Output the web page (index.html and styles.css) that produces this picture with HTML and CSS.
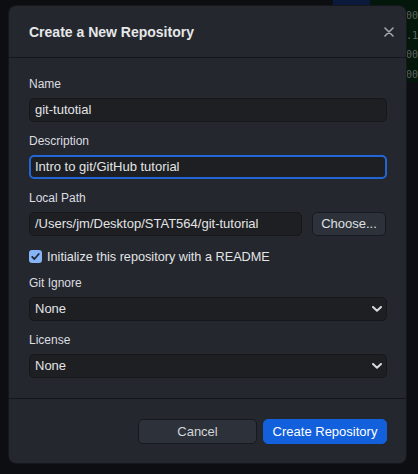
FILE: index.html
```html
<!DOCTYPE html>
<html>
<head>
<meta charset="utf-8">
<link rel="stylesheet" href="styles.css">
</head>
<body>
<div class="backdrop" aria-hidden="true">
  <div class="bg-blue"></div>
  <div class="bg-green"></div>
  <div class="bg-code">
    <div>00</div>
    <div>.1</div>
    <div>00</div>
    <div>00</div>
  </div>
</div>
<div class="dialog">
  <div class="dialog-header">
    <h1 class="title">Create a New Repository</h1>
    <svg class="close" width="10" height="10" viewBox="0 0 10 10"><path d="M1 1 L9 9 M9 1 L1 9" stroke="#a3a7ad" stroke-width="1.6" stroke-linecap="round" fill="none"/></svg>
  </div>
  <div class="dialog-body">
    <div class="field">
      <div class="label">Name</div>
      <div class="input">git-tutotial</div>
    </div>
    <div class="field">
      <div class="label">Description</div>
      <div class="input focused">Intro to git/GitHub tutorial</div>
    </div>
    <div class="field">
      <div class="label">Local Path</div>
      <div class="path-row">
        <div class="input path">/Users/jm/Desktop/STAT564/git-tutorial</div>
        <div class="btn choose">Choose...</div>
      </div>
    </div>
    <div class="check-row">
      <span class="checkbox"><svg width="13" height="13" viewBox="0 0 13 13"><path d="M3.2 6.8 L5.4 9 L9.8 4" stroke="#1d2a3a" stroke-width="1.8" fill="none" stroke-linecap="round" stroke-linejoin="round"/></svg></span>
      <span class="check-label">Initialize this repository with a README</span>
    </div>
    <div class="field">
      <div class="label">Git Ignore</div>
      <div class="input select"><span>None</span><svg width="10" height="6" viewBox="0 0 10 6"><path d="M1 1 L5 4.8 L9 1" stroke="#d9dadc" stroke-width="2" fill="none" stroke-linecap="round" stroke-linejoin="round"/></svg></div>
    </div>
    <div class="field">
      <div class="label">License</div>
      <div class="input select"><span>None</span><svg width="10" height="6" viewBox="0 0 10 6"><path d="M1 1 L5 4.8 L9 1" stroke="#d9dadc" stroke-width="2" fill="none" stroke-linecap="round" stroke-linejoin="round"/></svg></div>
    </div>
  </div>
  <div class="dialog-footer">
    <div class="btn cancel">Cancel</div>
    <div class="btn primary">Create Repository</div>
  </div>
</div>
</body>
</html>
```

FILE: styles.css
```css
html, body {
  margin: 0;
  padding: 0;
}
body {
  width: 418px;
  height: 474px;
  background: #0d0e11;
  font-family: "Liberation Sans", Arial, sans-serif;
  position: relative;
  overflow: hidden;
  padding-top: 6px;
  box-sizing: border-box;
}
.backdrop {
  position: absolute;
  inset: 0;
}
.bg-blue {
  position: absolute;
  left: 333px;
  top: 0;
  width: 37px;
  height: 8px;
  background: #0b1a3c;
}
.bg-green {
  position: absolute;
  left: 370px;
  top: 0;
  width: 48px;
  height: 82px;
  background: #04170b;
}
.bg-code {
  position: absolute;
  left: 406px;
  top: 6px;
  font-family: "DejaVu Sans Mono", monospace;
  font-size: 10px;
  line-height: 19.5px;
  color: #5d6462;
}
.dialog {
  position: relative;
  margin-left: 9px;
  width: 397px;
  height: 457px;
  background: #24272e;
  border-radius: 7px;
  box-shadow: 0 0 0 1px #15171b;
  display: flex;
  flex-direction: column;
  color: #dcdde0;
}
.dialog-header {
  height: 51px;
  border-bottom: 1px solid #141619;
  display: flex;
  align-items: center;
  justify-content: space-between;
  padding: 0 12px 0 20px;
}
.title {
  margin: 0;
  font-size: 14px;
  font-weight: bold;
  color: #e6e7e9;
  padding-top: 1px;
}
.close {
  margin-top: 1px;
}
.dialog-body {
  padding: 19px 19px 20px 20px;
  border-bottom: 1px solid #141619;
  display: flex;
  flex-direction: column;
  gap: 12px;
}
.field {
  display: flex;
  flex-direction: column;
  gap: 6px;
}
.label {
  font-size: 12px;
  line-height: 15px;
  color: #dcdde0;
}
.input {
  height: 24px;
  box-sizing: border-box;
  background: #1d1f23;
  border: 1px solid #15171a;
  border-radius: 5px;
  padding: 0 5px;
  font-size: 13px;
  line-height: 22px;
  color: #e3e4e6;
  white-space: nowrap;
  overflow: hidden;
}
.input.focused {
  border: 2px solid #2266d6;
  padding: 0 4px;
  line-height: 20px;
}
.path-row {
  display: flex;
  gap: 10px;
}
.input.path {
  width: 273px;
}
.btn {
  height: 25px;
  box-sizing: border-box;
  border-radius: 5px;
  font-size: 13px;
  line-height: 23px;
  text-align: center;
  white-space: nowrap;
}
.btn.choose {
  width: 74px;
  height: 24px;
  line-height: 22px;
  background: #2d323a;
  border: 1px solid #17191d;
  color: #dfe0e2;
}
.check-row {
  display: flex;
  align-items: center;
  gap: 5px;
  height: 15px;
  margin-top: 1px;
}
.checkbox {
  width: 13px;
  height: 13px;
  border-radius: 3px;
  background: #86b4f6;
  display: block;
}
.checkbox svg {
  display: block;
}
.check-label {
  font-size: 12.7px;
  color: #e3e4e6;
}
.input.select {
  display: flex;
  align-items: center;
  justify-content: space-between;
  padding-right: 4px;
}
.dialog-footer {
  flex: 1;
  display: flex;
  justify-content: flex-end;
  gap: 6px;
  padding: 20px 19px 0 0;
}
.btn.cancel {
  width: 119px;
  background: #2d323a;
  border: 1px solid #17191d;
  color: #d3d5d8;
}
.btn.primary {
  width: 124px;
  background: #1260dc;
  border: 1px solid #1260dc;
  color: #ffffff;
}
```
